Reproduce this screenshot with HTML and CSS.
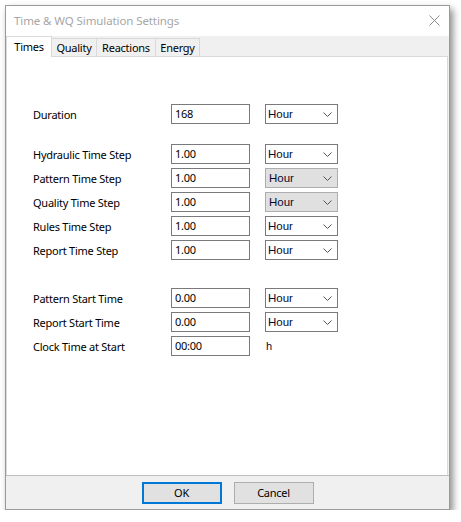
FILE: index.html
```html
<!DOCTYPE html>
<html>
<head>
<meta charset="utf-8">
<link rel="stylesheet" href="styles.css">
</head>
<body>
<div class="window">
  <div class="titlebar">
    <span class="title">Time &amp; WQ Simulation Settings</span>
    <svg class="close" width="11" height="11" viewBox="0 0 11 11"><path d="M0.5 0.5 L10.5 10.5 M10.5 0.5 L0.5 10.5" stroke="#8a8a8a" stroke-width="1" fill="none"/></svg>
  </div>
  <div class="tabs">
    <div class="tab active t1">Times</div>
    <div class="tab t2">Quality</div>
    <div class="tab t3">Reactions</div>
    <div class="tab t4">Energy</div>
  </div>
  <div class="panel">
    <div class="group">
      <div class="row"><span class="label">Duration</span><div class="input">168</div><div class="select"><span>Hour</span><svg class="chev" width="9" height="5" viewBox="0 0 9 5"><path d="M0.5 0.5 L4.5 4.5 L8.5 0.5" stroke="#555" fill="none"/></svg></div></div>
    </div>
    <div class="group">
      <div class="row"><span class="label">Hydraulic Time Step</span><div class="input">1.00</div><div class="select"><span>Hour</span><svg class="chev" width="9" height="5" viewBox="0 0 9 5"><path d="M0.5 0.5 L4.5 4.5 L8.5 0.5" stroke="#555" fill="none"/></svg></div></div>
      <div class="row"><span class="label">Pattern Time Step</span><div class="input">1.00</div><div class="select disabled"><span>Hour</span><svg class="chev" width="9" height="5" viewBox="0 0 9 5"><path d="M0.5 0.5 L4.5 4.5 L8.5 0.5" stroke="#555" fill="none"/></svg></div></div>
      <div class="row"><span class="label">Quality Time Step</span><div class="input">1.00</div><div class="select disabled"><span>Hour</span><svg class="chev" width="9" height="5" viewBox="0 0 9 5"><path d="M0.5 0.5 L4.5 4.5 L8.5 0.5" stroke="#555" fill="none"/></svg></div></div>
      <div class="row"><span class="label">Rules Time Step</span><div class="input">1.00</div><div class="select"><span>Hour</span><svg class="chev" width="9" height="5" viewBox="0 0 9 5"><path d="M0.5 0.5 L4.5 4.5 L8.5 0.5" stroke="#555" fill="none"/></svg></div></div>
      <div class="row"><span class="label">Report Time Step</span><div class="input">1.00</div><div class="select"><span>Hour</span><svg class="chev" width="9" height="5" viewBox="0 0 9 5"><path d="M0.5 0.5 L4.5 4.5 L8.5 0.5" stroke="#555" fill="none"/></svg></div></div>
    </div>
    <div class="group last">
      <div class="row"><span class="label">Pattern Start Time</span><div class="input">0.00</div><div class="select"><span>Hour</span><svg class="chev" width="9" height="5" viewBox="0 0 9 5"><path d="M0.5 0.5 L4.5 4.5 L8.5 0.5" stroke="#555" fill="none"/></svg></div></div>
      <div class="row"><span class="label">Report Start Time</span><div class="input">0.00</div><div class="select"><span>Hour</span><svg class="chev" width="9" height="5" viewBox="0 0 9 5"><path d="M0.5 0.5 L4.5 4.5 L8.5 0.5" stroke="#555" fill="none"/></svg></div></div>
      <div class="row"><span class="label">Clock Time at Start</span><div class="input">00:00</div><span class="unit">h</span></div>
    </div>
  </div>
  <div class="footer">
    <div class="btn default">OK</div>
    <div class="btn">Cancel</div>
  </div>
</div>
</body>
</html>
```
FILE: styles.css
```css
html, body {
  margin: 0;
  padding: 0;
  background: #ffffff;
}
body {
  font-family: "Noto Sans", "Open Sans", sans-serif;
  font-size: 11px;
  letter-spacing: -0.25px;
  color: #000;
}
.window {
  margin: 5px 0 0 5px;
  width: 445px;
  height: 505px;
  box-sizing: border-box;
  border: 1px solid #9a9a9a;
  background: #f0f0f0;
  box-shadow: 3px 4px 7px rgba(0,0,0,0.45);
  display: flex;
  flex-direction: column;
}
.titlebar {
  height: 30px;
  background: #ffffff;
  display: flex;
  align-items: center;
  justify-content: space-between;
  padding: 0 9px 0 8px;
}
.title {
  color: #a6a6a6;
  font-size: 11.5px;
  letter-spacing: -0.1px;
  position: relative;
  top: -1px;
}
.close {
  position: relative;
  top: -1px;
}
.tabs {
  display: flex;
  align-items: flex-end;
  height: 20px;
  position: relative;
  z-index: 1;
}
.tab {
  height: 17px;
  line-height: 17px;
  border: 1px solid #d9d9d9;
  border-left: none;
  border-bottom: none;
  background: #f0f0f0;
  box-sizing: content-box;
  text-align: center;
  white-space: nowrap;
}
.t1 { width: 44px; }
.t2 { width: 44px; }
.t3 { width: 58px; }
.t4 { width: 43px; }
.tab.active {
  background: #ffffff;
  height: 20px;
  line-height: 19px;
  border-left: 1px solid #d9d9d9;
  margin-bottom: -1px;
}
.panel {
  flex: 1;
  background: #ffffff;
  border: 1px solid #d9d9d9;
  margin-right: 1px;
  padding: 47px 0 0 26px;
  display: flex;
  flex-direction: column;
}
.group {
  display: flex;
  flex-direction: column;
  gap: 4px;
  margin-bottom: 20px;
}
.group:nth-child(2) { margin-bottom: 28px; }
.row {
  display: flex;
  align-items: center;
  height: 20px;
}
.label {
  width: 138px;
}
.input {
  width: 79px;
  height: 20px;
  box-sizing: border-box;
  border: 1px solid #7a7a7a;
  padding-left: 3px;
  line-height: 17px;
}
.select {
  margin-left: 15px;
  width: 73px;
  height: 20px;
  box-sizing: border-box;
  border: 1px solid #7a7a7a;
  display: flex;
  align-items: center;
  justify-content: space-between;
  padding: 0 5px 0 2px;
  font-family: "Liberation Sans", Arial, sans-serif;
  font-size: 11.5px;
  letter-spacing: 0;
  color: #0a0a2e;
}
.select.disabled {
  background: #e0e0e0;
  border-color: #adadad;
  padding-left: 3px;
}
.chev { margin-top: 1px; }
.unit {
  margin-left: 16px;
  font-family: "Liberation Sans", Arial, sans-serif;
  letter-spacing: 0;
  color: #0a0a2e;
}
.footer {
  height: 33px;
  display: flex;
  justify-content: center;
  align-items: center;
  gap: 12px;
  border-top: 1px solid #bdbdbd;
  margin-top: -1px;
}
.btn {
  width: 80px;
  height: 22px;
  box-sizing: border-box;
  border: 1px solid #adadad;
  background: #e1e1e1;
  display: flex;
  align-items: center;
  justify-content: center;
}
.btn.default {
  border: 2px solid #0078d7;
}
```
